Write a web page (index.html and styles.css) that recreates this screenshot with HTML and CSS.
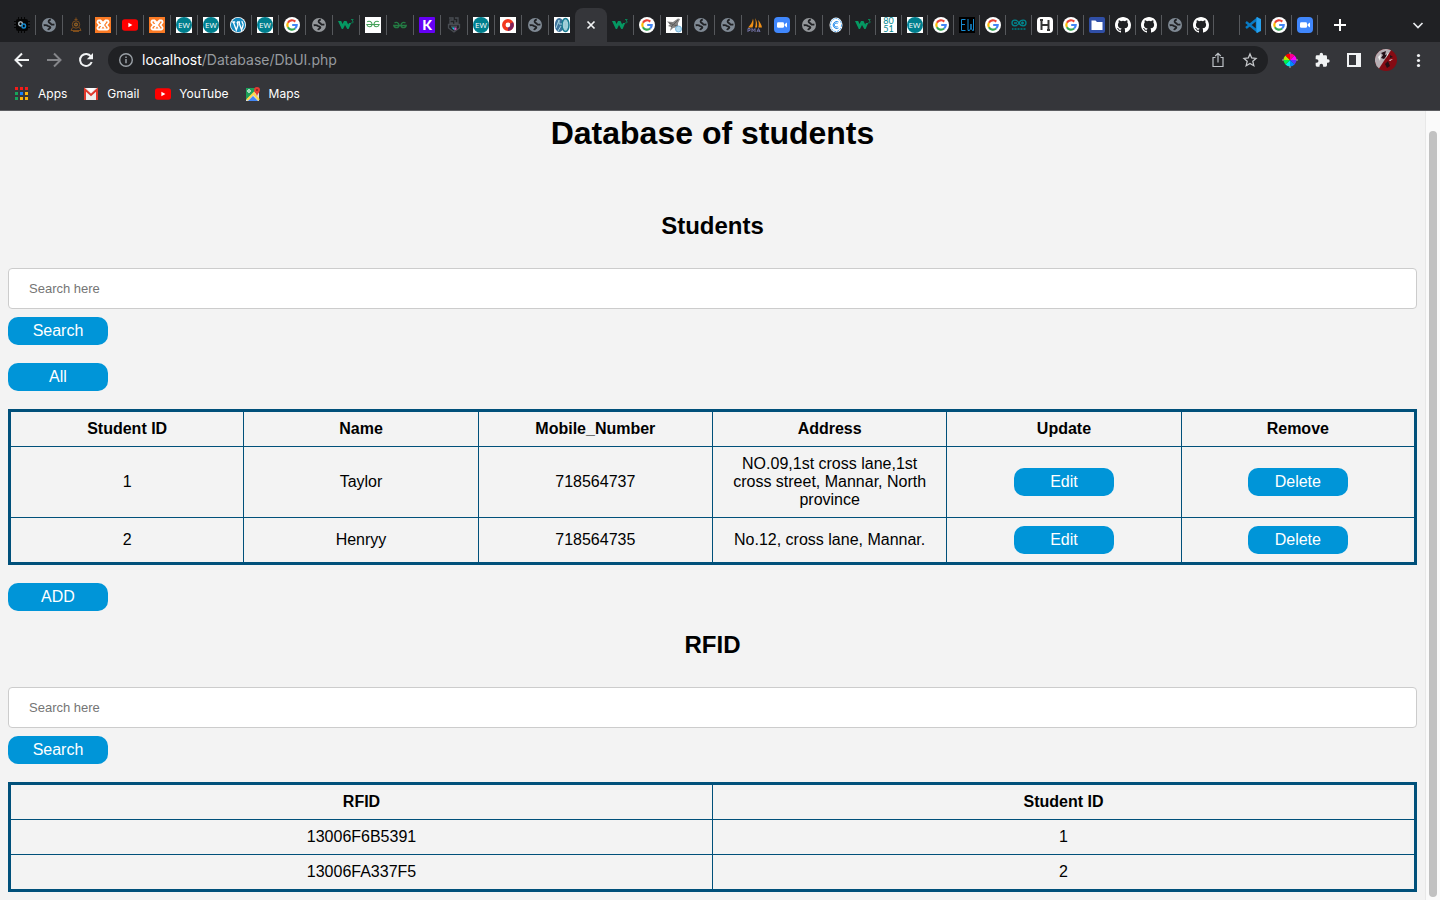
FILE: index.html
```html
<!DOCTYPE html>
<html lang="en">
<head>
<meta charset="utf-8">
<title>Database of students</title>
<link rel="stylesheet" href="styles.css">
</head>
<body>
<svg class="sprite" aria-hidden="true">
  <symbol id="globe" viewBox="0 0 16 16"><circle cx="8" cy="8" r="7" fill="currentColor"/><path d="M9.800 2.800C8 2.800 7.300 4 7.800 5.200c.4 1 1.700.8 2.200 1.700.6 1 1.800.9 3.400.5M2.700 8.300c1.700-.3 3.300-.2 4.200.6.9.7 2.300.4 2.400 1.500 0 1.200-1.800 1-2.100 2.800" fill="none" stroke="#202124" stroke-width="1.900"/></symbol>
  <symbol id="google" viewBox="0 0 16 16"><circle cx="8" cy="8" r="8" fill="#fff"/><g fill="none" stroke-width="2.200"><path d="M11.300 4.600A4.700 4.700 0 0 0 3.900 5.700" stroke="#ea4335"/><path d="M3.900 5.700a4.700 4.700 0 0 0 0 4.600" stroke="#fbbc05"/><path d="M3.900 10.300a4.700 4.700 0 0 0 7.200 1.200" stroke="#34a853"/><path d="M11.100 11.500A4.600 4.600 0 0 0 12.700 8H8.200" stroke="#4285f4"/></g></symbol>
  <symbol id="ewdark" viewBox="0 0 16 16"><path fill="#000" d="M0 0h16v16H0z"/><path d="M6.500 2.500h-4v11h4M2.500 7.500H6M9 2v11.500h1.500L12 11V7v4l1.500 2.500h1V2" fill="none" stroke="#168bd2"/></symbol>
  <symbol id="xampp" viewBox="0 0 16 16"><path fill="#fb7a24" d="M0 0h16v16H0z"/><path d="M4 3.500h1.500L8 6l2.500-2.500H12a1.500 1.500 0 0 1 1.200 2.500L11.500 8l1.700 2a1.500 1.500 0 0 1-1.200 2.500H4A1.500 1.500 0 0 1 2.800 10L4.500 8 2.800 6A1.500 1.500 0 0 1 4 3.500zM5 8h3M5.500 4.500l5 7M10.500 4.500l-5 7" fill="none" stroke="#fff" stroke-width="1.800"/></symbol>
  <symbol id="youtube" viewBox="0 0 16 16"><rect y="2.200" width="16" height="11.600" rx="2.800" fill="#f00"/><path d="M6.400 5.700v4.600l4-2.300z" fill="#fff"/></symbol>
  <symbol id="chip" viewBox="0 0 16 16"><path d="M4.500 0v16M7.500 0v16M10.500 0v16M0 4.500h16M0 7.500h16M0 10.500h16" stroke="#050505"/><rect x="2" y="2" width="12" height="12" rx="2" fill="#050505"/><rect x="4.800" y="4.800" width="3.500" height="4" rx="1.500" fill="none" stroke="#bdc7cc" stroke-width="1.300"/><rect x="8" y="7" width="3.500" height="4" rx="1.500" fill="none" stroke="#158bd0" stroke-width="1.500"/></symbol>
  <symbol id="emblem" viewBox="0 0 16 16"><g fill="none" stroke="#7d4d1c"><circle cx="8" cy="7.500" r="3.700"/><path d="M8 .5v3M6.500 2.500h3M4.500 10.500l-1.500 3h10l-1.500-3M5 14.500h6"/></g><circle cx="8" cy="7.500" r="2" fill="#936022"/><circle cx="8" cy="7.500" r=".8" fill="#333"/></symbol>
  <symbol id="wordpress" viewBox="0 0 16 16"><circle cx="8" cy="8" r="8" fill="#fff"/><circle cx="8" cy="8" r="7.200" fill="#168bc0"/><path d="M2.200 5h3M7 5h3M3.300 5l3 8L8 8 7 5M8.800 5l2.800 8 1.500-5c.4-1.800-1.500-2-1-4" fill="none" stroke="#fff" stroke-width="1.300"/></symbol>
  <symbol id="w3" viewBox="0 0 16 16"><path d="M0 4h3.200l1.300 3L6 4h2.500l1.700 3.500L11 6h2.200l-2.600 6H9.300L7 8l-2 4H3.800z" fill="#059862"/><path d="M13 2.500h2.200L14 4c2 0 1.500 2.500-.8 1.800" fill="none" stroke="#059862" stroke-width=".8"/></symbol>
  <symbol id="geeks" viewBox="0 0 16 16"><path d="M2.500 6C4 4.800 7 5.500 7 8.200 7 11.500 2.500 11.500 1.800 8.500H14.200C13.500 11.500 9 11.500 9 8.200 9 5.500 12 4.800 13.500 6" fill="none" stroke="currentColor" stroke-width="1.300"/></symbol>
  <symbol id="geekslight" viewBox="0 0 16 16"><path fill="#fff" d="M0 0h16v16H0z"/><path d="M2.200 4.800C4 3.500 7 4.500 7 7.200 7 10.500 2.500 10.500 1.800 7.500H14.200C13.500 10.500 9 10.500 9 7.200 9 4.500 12 3.500 13.800 4.800" fill="none" stroke="#45a15a" stroke-width="1.100"/></symbol>
  <symbol id="shield" viewBox="0 0 16 16"><path d="M3 1h4v2H4v3h3M9 1h3v5H9V3M2.500 7.500h11v3.500L8 15l-5.500-4V7.500zM5 9.500h6" fill="none" stroke="#484c52" stroke-width="1.300"/><path d="M5.500 10.500h3v3z" fill="#15c8e6"/><path d="M8.500 10.500h2v2l-2 1z" fill="#dd51bb"/></symbol>
  <symbol id="ring" viewBox="0 0 16 16"><path fill="#fff" d="M0 0h16v16H0z"/><circle cx="8" cy="8" r="4.200" fill="none" stroke="#f2381f" stroke-width="3.500"/><path d="M8 12.200A4.200 4.200 0 0 0 11.500 6" fill="none" stroke="#7d235d" stroke-width="3.500"/></symbol>
  <symbol id="dbui" viewBox="0 0 16 16"><path fill="#fff" d="M0 0h16v16H0z"/><ellipse cx="5.300" cy="8" rx="4.500" ry="7" fill="#3c719a"/><ellipse cx="11.500" cy="8" rx="3.500" ry="6.500" fill="#9cc9d3" stroke="#187b91" stroke-width="1.500"/><path d="M2 11l3-8v4h3M4 14l3-5M10 5h3v6h-3z" fill="none" stroke="#a5d4df"/></symbol>
  <symbol id="plane" viewBox="0 0 16 16"><path fill="#fff" d="M0 0h16v16H0z"/><path d="M1 4.500l6 .5 5-3.500 2 .5-2 4v4l-5 1-3 3 1-4-3-1 2-1.500z" fill="#858585"/><path d="M3 6l8 3M5 10l7-7" stroke="#5f5f5f"/><circle cx="12.500" cy="12" r="3" fill="#b2dcf2" stroke="#75b4db"/></symbol>
  <symbol id="zoom" viewBox="0 0 16 16"><rect width="16" height="16" rx="4" fill="#4087fc"/><rect x="3" y="5.300" width="7" height="5.400" rx="1.300" fill="#fff"/><path d="M10.600 7.200L13 5.500v5l-2.400-1.700z" fill="#fff"/></symbol>
  <symbol id="sails" viewBox="0 0 16 16"><path d="M6 1.500C5.500 5 3.500 8 1 10.500h4.500C6.500 8 6.800 4.500 6 1.500zM8 1c1 3 1 6.500 0 9.500h2C10.500 7 10 4 8 1zM11 3c1 2.500 1 5 .3 7.500H15C14.500 7.500 13 5 11 3z" fill="#f09016"/><path d="M1 15v-3.500h2v2H1.500M5 15v-3.500l1.500 2 1.500-2V15M10 15l1.500-3.500L13 15M10.500 14h2.500" fill="none" stroke="#7474a8"/></symbol>
  <symbol id="coin" viewBox="0 0 16 16"><ellipse cx="8" cy="8" rx="6.500" ry="7.500" fill="#fff"/><ellipse cx="8" cy="8" rx="5.500" ry="6.500" fill="none" stroke="#49a1ed" stroke-dasharray="2 1"/><path d="M10.500 5a3.500 3.500 0 1 0 0 6M9.500 6.500a2 2 0 1 0 0 3" fill="none" stroke="#238bec"/></symbol>
  <symbol id="arduino" viewBox="0 0 16 16"><path d="M8 6C6 2 1 2.500 1 6s5 4 7 0 7-3.500 7 0-5 4-7 0M3 6h3M10 6h3M11.500 4.500v3" fill="none" stroke="#00878f" stroke-width="1.300"/><path d="M1 12h14" stroke="#00676d" stroke-width="2" stroke-dasharray="1 .5"/></symbol>
  <symbol id="hacker" viewBox="0 0 16 16"><rect width="16" height="16" rx="4" fill="#fff"/><path d="M4.500 3v10M11.500 3v10M4.500 8h7M3 3h3M10 13h3" fill="none" stroke="#333" stroke-width="2"/></symbol>
  <symbol id="folder" viewBox="0 0 16 16"><rect width="16" height="16" rx="2" fill="#304fa7"/><path d="M2.500 3.500h4l1.500 1.500h5.500v8h-11z" fill="#fff"/></symbol>
  <symbol id="github" viewBox="0 0 16 16"><path fill="#fff" d="M8 0C3.580 0 0 3.580 0 8c0 3.540 2.290 6.530 5.470 7.590.4.070.55-.17.55-.38 0-.19-.01-.82-.01-1.490-2.010.37-2.530-.49-2.690-.94-.09-.23-.48-.94-.82-1.130-.28-.15-.68-.52-.01-.53.63-.01 1.080.58 1.230.82.72 1.210 1.870.87 2.330.66.070-.52.28-.87.51-1.070-1.780-.2-3.640-.89-3.640-3.950 0-.87.31-1.590.82-2.150-.08-.2-.36-1.020.08-2.120 0 0 .67-.21 2.200.82a7.600 7.600 0 0 1 4 0c1.530-1.040 2.200-.82 2.200-.82.44 1.100.16 1.920.08 2.120.51.56.82 1.270.82 2.150 0 3.070-1.870 3.750-3.650 3.950.29.25.54.73.54 1.480 0 1.070-.01 1.930-.01 2.200 0 .21.150.46.55.38A8 8 0 0 0 16 8c0-4.420-3.580-8-8-8z"/></symbol>
  <symbol id="vscode" viewBox="0 0 16 16"><path d="M1 5l11 9V2L1 11" fill="none" stroke="#087bc5" stroke-width="2.400"/><path d="M11.500 0L16 2v12l-4.500 2z" fill="#26a1ef"/></symbol>
</svg>

<div class="browser">
  <header class="chrome">
    <nav class="tabs" aria-label="Tabs">
      <button class="tab" aria-label="Circuits"><svg><use href="#chip"/></svg></button>
      <button class="tab slate" aria-label="Site"><svg><use href="#globe"/></svg></button>
      <button class="tab" aria-label="Emblem"><svg><use href="#emblem"/></svg></button>
      <button class="tab" aria-label="XAMPP"><svg><use href="#xampp"/></svg></button>
      <button class="tab" aria-label="YouTube"><svg><use href="#youtube"/></svg></button>
      <button class="tab" aria-label="XAMPP"><svg><use href="#xampp"/></svg></button>
      <button class="tab"><span class="fav ew"><span>EW</span></span></button>
      <button class="tab"><span class="fav ew"><span>EW</span></span></button>
      <button class="tab" aria-label="WordPress"><svg><use href="#wordpress"/></svg></button>
      <button class="tab"><span class="fav ew"><span>EW</span></span></button>
      <button class="tab" aria-label="Google"><svg><use href="#google"/></svg></button>
      <button class="tab" aria-label="Site"><svg><use href="#globe"/></svg></button>
      <button class="tab" aria-label="W3Schools"><svg><use href="#w3"/></svg></button>
      <button class="tab" aria-label="GeeksforGeeks"><svg><use href="#geekslight"/></svg></button>
      <button class="tab green" aria-label="GeeksforGeeks"><svg><use href="#geeks"/></svg></button>
      <button class="tab"><span class="fav knote">K</span></button>
      <button class="tab" aria-label="Shield"><svg><use href="#shield"/></svg></button>
      <button class="tab"><span class="fav ew"><span>EW</span></span></button>
      <button class="tab" aria-label="Ring"><svg><use href="#ring"/></svg></button>
      <button class="tab slate" aria-label="Site"><svg><use href="#globe"/></svg></button>
      <button class="tab before-active" aria-label="Database"><svg><use href="#dbui"/></svg></button>
      <button class="tab active" aria-label="Close tab"><svg viewBox="0 0 16 16"><path d="M4.500 4.500l7 7m0-7l-7 7" stroke="#f1f3f4" stroke-width="1.700"/></svg></button>
      <button class="tab" aria-label="W3Schools"><svg><use href="#w3"/></svg></button>
      <button class="tab" aria-label="Google"><svg><use href="#google"/></svg></button>
      <button class="tab" aria-label="Aircraft"><svg><use href="#plane"/></svg></button>
      <button class="tab slate" aria-label="Site"><svg><use href="#globe"/></svg></button>
      <button class="tab slate" aria-label="Site"><svg><use href="#globe"/></svg></button>
      <button class="tab" aria-label="phpMyAdmin"><svg><use href="#sails"/></svg></button>
      <button class="tab" aria-label="Zoom"><svg><use href="#zoom"/></svg></button>
      <button class="tab" aria-label="Site"><svg><use href="#globe"/></svg></button>
      <button class="tab" aria-label="Coin"><svg><use href="#coin"/></svg></button>
      <button class="tab narrow" aria-label="W3Schools"><svg><use href="#w3"/></svg></button>
      <button class="tab narrow"><span class="fav board"><span>80</span><span>51</span></span></button>
      <button class="tab narrow"><span class="fav ew"><span>EW</span></span></button>
      <button class="tab narrow" aria-label="Google"><svg><use href="#google"/></svg></button>
      <button class="tab narrow" aria-label="EW"><svg><use href="#ewdark"/></svg></button>
      <button class="tab narrow" aria-label="Google"><svg><use href="#google"/></svg></button>
      <button class="tab narrow" aria-label="Arduino"><svg><use href="#arduino"/></svg></button>
      <button class="tab narrow" aria-label="H"><svg><use href="#hacker"/></svg></button>
      <button class="tab narrow" aria-label="Google"><svg><use href="#google"/></svg></button>
      <button class="tab narrow" aria-label="Folder"><svg><use href="#folder"/></svg></button>
      <button class="tab narrow" aria-label="GitHub"><svg><use href="#github"/></svg></button>
      <button class="tab narrow" aria-label="GitHub"><svg><use href="#github"/></svg></button>
      <button class="tab narrow slate" aria-label="Site"><svg><use href="#globe"/></svg></button>
      <button class="tab narrow" aria-label="GitHub"><svg><use href="#github"/></svg></button>
      <button class="tab narrow" aria-label="Blank"></button>
      <button class="tab narrow" aria-label="VS Code"><svg><use href="#vscode"/></svg></button>
      <button class="tab narrow" aria-label="Google"><svg><use href="#google"/></svg></button>
      <button class="tab narrow" aria-label="Zoom"><svg><use href="#zoom"/></svg></button>
      <button class="new-tab" aria-label="New tab"><svg viewBox="0 0 16 16"><path d="M8 2v12M2 8h12" stroke="#fff" stroke-width="2"/></svg></button>
      <button class="tab-list" aria-label="Search tabs"><svg viewBox="0 0 16 16"><path d="M3.500 6l4.500 4.500L12.500 6" fill="none" stroke="#e8eaed" stroke-width="1.700"/></svg></button>
    </nav>

    <div class="toolbar">
      <button class="tool" aria-label="Back"><svg viewBox="0 0 16 16"><path d="M15 8H2M8 1.500L1.500 8 8 14.500" fill="none" stroke="#f1f3f4" stroke-width="2"/></svg></button>
      <button class="tool" aria-label="Forward"><svg viewBox="0 0 16 16"><path d="M1 8h13M8 1.500L14.500 8 8 14.500" fill="none" stroke="#85868a" stroke-width="2"/></svg></button>
      <button class="tool" aria-label="Reload"><svg viewBox="0 0 16 16"><path d="M13 4.500A6 6 0 1 0 13.700 10" fill="none" stroke="#f1f3f4" stroke-width="2"/><path d="M15 1v6.200H8.800z" fill="#f1f3f4"/></svg></button>
      <div class="address">
        <svg viewBox="0 0 16 16"><circle cx="8" cy="8" r="6.300" fill="none" stroke="#9aa0a6" stroke-width="1.400"/><path d="M8 7v4.300M8 4.400v1.500" stroke="#9aa0a6" stroke-width="1.500"/></svg>
        <span class="url"><span class="host">localhost</span>/Database/DbUI.php</span>
        <button class="tool" aria-label="Share"><svg viewBox="0 0 16 16"><path d="M5.500 5.500h-2.500v9h10v-9h-2.500M8 10.500V1.500M5.200 4L8 1.300 10.800 4" fill="none" stroke="#bdc1c6" stroke-width="1.200"/></svg></button>
        <button class="tool" aria-label="Bookmark"><svg viewBox="0 0 16 16"><path d="M8 2l1.700 4 4.300.4-3.200 2.900 1 4.400L8 11.400l-3.800 2.300 1-4.400L2 6.400 6.300 6z" fill="none" stroke="#c6c8cb" stroke-width="1.300"/></svg></button>
      </div>
      <button class="tool" aria-label="Color picker"><svg viewBox="0 0 16 16"><path d="M8 8V1.500a6.500 6.500 0 0 1 4.600 1.900z" fill="#ff008c"/><path d="M8 8l4.600-4.600A6.500 6.500 0 0 1 14.500 8z" fill="#f0f"/><path d="M8 8h6.500a6.500 6.500 0 0 1-1.900 4.600z" fill="#5a36ff"/><path d="M8 8l4.600 4.600A6.500 6.500 0 0 1 8 14.500z" fill="#0089ff"/><path d="M8 8v6.500a6.500 6.500 0 0 1-4.600-1.900z" fill="#0ee"/><path d="M8 8l-4.600 4.600A6.500 6.500 0 0 1 1.500 8z" fill="#00f34c"/><path d="M8 8H1.500a6.500 6.500 0 0 1 1.900-4.600z" fill="#bce600"/><path d="M8 8L3.400 3.400A6.500 6.500 0 0 1 8 1.500z" fill="#f00"/><path d="M8 0v2M8 14v2M0 8h2M14 8h2" stroke="#aaa"/></svg></button>
      <button class="tool" aria-label="Extensions"><svg viewBox="0 0 24 24"><path d="M21 11h-1.500V7a2 2 0 0 0-2-2h-4V3.500a2.500 2.500 0 0 0-5 0V5h-4a2 2 0 0 0-2 2v3.800H4a2.700 2.700 0 0 1 0 5.400H2.500V20a2 2 0 0 0 2 2h3.800v-1.500a2.700 2.700 0 0 1 5.400 0V22h3.800a2 2 0 0 0 2-2v-4H21a2.500 2.500 0 0 0 0-5z" fill="#f1f3f4"/></svg></button>
      <button class="tool" aria-label="Side panel"><svg viewBox="0 0 16 16"><path fill-rule="evenodd" d="M1 1h14v14H1zm2 2v10h7V3z" fill="#f1f3f4"/></svg></button>
      <button class="tool avatar" aria-label="Profile"><svg viewBox="0 0 22 22"><circle cx="11" cy="11" r="11" fill="#850b13"/><path d="M4 19.500A11 11 0 0 1 16 1.200z" fill="#b6afb4"/><path d="M6 4l5-2-1 4 3-1-4 5-3-1 2-3zM10 15l3-3 2 5-3 2zM15 6l3 2-3 1z" fill="#241016"/><path d="M3 8l3-3-1 7M12 5l2-1-3 5M14 11l4-1-3 2z" fill="#eee"/></svg></button>
      <button class="tool" aria-label="Menu"><svg viewBox="0 0 16 16"><g fill="#f1f3f4"><circle cx="8.500" cy="3.500" r="1.600"/><circle cx="8.500" cy="8.500" r="1.600"/><circle cx="8.500" cy="13.500" r="1.600"/></g></svg></button>
    </div>

    <nav class="bookmarks" aria-label="Bookmarks">
      <a href="#"><svg viewBox="0 0 16 16"><path d="M1 1h3v3H1zm5 0h3v3H6zm5 0h3v3h-3z" fill="#f51d19"/><path d="M1 6h3v3H1zM1 11h3v3H1z" fill="#17a55b"/><path d="M6 6h3v3H6z" fill="#1681fb"/><path d="M11 6h3v3h-3zM6 11h3v3H6zm5 0h3v3h-3z" fill="#fbb50c"/></svg>Apps</a>
      <a href="#"><svg viewBox="0 0 16 16"><path d="M1 2h14v12H1z" fill="#eee"/><path d="M2 14V3.500l6 5.500 6-5.500V14" fill="none" stroke="#df392d" stroke-width="2"/><path d="M4 2h8L8 6.500z" fill="#fff"/></svg>Gmail</a>
      <a href="#"><svg><use href="#youtube"/></svg>YouTube</a>
      <a href="#"><svg viewBox="0 0 16 16"><path d="M1 2h13v13H1z" fill="#d8dfe5"/><path d="M1 2h10v3L1 14z" fill="#1c9f59"/><path d="M3 15l5-5 5 5z" fill="#4286f5"/><path d="M2 14l8-8" stroke="#ffd64b" stroke-width="2"/><path d="M9 8l5 6" stroke="#ffd64b" stroke-width="2"/><path d="M12 1a3 3 0 0 0-3 3c0 2 2 3 3 6 1-3 3-4 3-6a3 3 0 0 0-3-3z" fill="#e43b31"/><circle cx="12" cy="4" r="1" fill="#85221d"/><circle cx="4" cy="5" r="1.300" fill="none" stroke="#fff"/></svg>Maps</a>
    </nav>
  </header>

  <div class="viewport">
    <main class="page">
      <h1>Database of students</h1>
      <section>
        <h2>Students</h2>
        <form class="search">
          <input type="text" placeholder="Search here" aria-label="Search students">
          <button class="btn" type="button">Search</button>
          <button class="btn spaced" type="button">All</button>
        </form>
        <table>
          <thead><tr><th>Student ID</th><th>Name</th><th>Mobile_Number</th><th>Address</th><th>Update</th><th>Remove</th></tr></thead>
          <tbody>
            <tr><td>1</td><td>Taylor</td><td>718564737</td><td>NO.09,1st cross lane,1st cross street, Mannar, North province</td><td><button class="btn" type="button">Edit</button></td><td><button class="btn" type="button">Delete</button></td></tr>
            <tr><td>2</td><td>Henryy</td><td>718564735</td><td>No.12, cross lane, Mannar.</td><td><button class="btn" type="button">Edit</button></td><td><button class="btn" type="button">Delete</button></td></tr>
          </tbody>
        </table>
        <button class="btn spaced" type="button">ADD</button>
      </section>
      <section>
        <h2>RFID</h2>
        <form class="search">
          <input type="text" placeholder="Search here" aria-label="Search RFID">
          <button class="btn" type="button">Search</button>
        </form>
        <table>
          <thead><tr><th>RFID</th><th>Student ID</th></tr></thead>
          <tbody>
            <tr><td>13006F6B5391</td><td>1</td></tr>
            <tr><td>13006FA337F5</td><td>2</td></tr>
          </tbody>
        </table>
      </section>
    </main>
    <div class="scrollbar"><div class="thumb"></div></div>
  </div>
</div>
</body>
</html>
```
FILE: styles.css
```css
* { box-sizing: border-box; }

body {
  margin: 0;
  background: #f3f3f3;
  color: #000;
  font: 16px/18px "Liberation Sans", Arial, sans-serif;
}

button { font: inherit; border: 0; padding: 0; background: none; }
.sprite { position: absolute; width: 0; height: 0; }

.browser { display: flex; flex-direction: column; min-height: 100vh; }

/* Browser frame */
.chrome {
  background: #35363a;
  border-bottom: 1px solid #5c5d61;
  font-family: Inter, Roboto, sans-serif;
}
.chrome svg { display: block; width: 16px; height: 16px; flex: none; }

.tabs {
  display: flex;
  align-items: flex-end;
  height: 42px;
  padding: 0 14px 0 9px;
  background: #202124;
}
.tab {
  display: flex;
  align-items: center;
  justify-content: center;
  width: 27px;
  height: 20px;
  margin-bottom: 7px;
  border-right: 1px solid #56585c;
  color: #94979b;
  flex: none;
}
.tab.narrow { width: 26px; }
.tab.slate { color: #808a95; }
.tab.green { color: #247b43; }
.tab.before-active { width: 26px; border-right: 0; }
.tab.active {
  width: 32px;
  height: 34px;
  margin-bottom: 0;
  border-right: 0;
  border-radius: 8px 8px 0 0;
  background: #35363a;
}
.new-tab { margin: 0 auto 9px 14px; }
.tab-list { margin-bottom: 9px; }

/* Lettered favicons */
.fav {
  display: flex;
  align-items: center;
  justify-content: center;
  width: 16px;
  height: 16px;
  background: #fff;
}
.ew span {
  width: 16px;
  height: 16px;
  border-radius: 8px;
  background: #007f8e;
  color: #fff;
  font: 8px/16px "Open Sans", sans-serif;
}
.knote {
  border-radius: 1px;
  background: #6500f5;
  color: #fff;
  font: 900 14px/16px Lato, sans-serif;
}
.board {
  flex-direction: column;
  color: #008891;
  font: 9px/8px Lato, sans-serif;
}

.toolbar {
  display: flex;
  align-items: center;
  height: 36px;
  padding: 0 6px;
}
.tool {
  display: flex;
  align-items: center;
  justify-content: center;
  width: 32px;
  height: 28px;
  flex: none;
}
.chrome .avatar svg { width: 22px; height: 22px; }
.address {
  display: flex;
  align-items: center;
  flex: 1;
  height: 28px;
  margin: 0 6px;
  padding: 0 2px 0 10px;
  border-radius: 14px;
  background: #202124;
}
.url { flex: 1; margin-left: 8px; font-size: 14px; color: #969a9f; }
.host { color: #fff; }

.bookmarks {
  display: flex;
  gap: 16px;
  height: 32px;
  padding: 0 14px;
  align-items: center;
}
.bookmarks a {
  display: flex;
  align-items: center;
  gap: 8px;
  color: #fff;
  font-size: 12px;
  text-decoration: none;
}

/* Web page */
.viewport { display: flex; flex: 1; }
.page { flex: 1; min-width: 0; padding: 4px 8px 8px; }

h1, h2 { text-align: center; font-weight: 700; }
h1 { margin: 0 0 60px; font-size: 32px; line-height: 37px; }
h2 { margin: 0 0 29px; font-size: 24px; line-height: 27px; }

.search { display: flex; flex-direction: column; align-items: flex-start; }
.search input {
  width: 100%;
  margin: 0 0 8px;
  padding: 12px 20px;
  border: 1px solid #ccc;
  border-radius: 4px;
  background: #fff;
  font: 13px/15px "Liberation Sans", Arial, sans-serif;
}
.search input::placeholder { color: #757575; }

.btn {
  width: 100px;
  height: 28px;
  border-radius: 10px;
  background: #0095d8;
  color: #fff;
  vertical-align: top;
}
.spaced { margin-top: 18px; }
section > .spaced { margin-bottom: 20px; }

table {
  width: 100%;
  margin-top: 18px;
  border: 3px solid #00507a;
  border-collapse: collapse;
  table-layout: fixed;
}
th, td {
  padding: 8px;
  border: 1px solid #00507a;
  text-align: center;
  vertical-align: middle;
}

.scrollbar {
  width: 15px;
  padding: 20px 3px 3px;
  border-left: 1px solid #e8e8e8;
  background: #fafafa;
  display: flex;
}
.thumb { flex: 1; border-radius: 4px; background: #c1c1c1; }
```
